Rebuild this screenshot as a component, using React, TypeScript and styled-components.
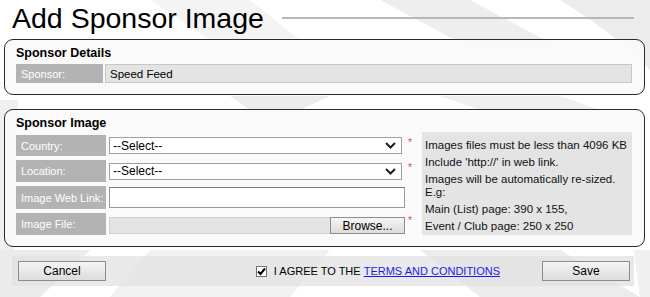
import styled, { createGlobalStyle } from 'styled-components';

const GlobalStyle = createGlobalStyle`
  body {
    margin: 0;
    font-family: "Liberation Sans", Arial, sans-serif;
    font-size: 11px;
    color: #000;
    background: #fff;
  }
`;

const infoLines = [
  ['Images files must be less than 4096 KB'],
  ["Include 'http://' in web link."],
  ['Images will be automatically re-sized.', 'E.g:'],
  ['Main (List) page: 390 x 155,'],
  ['Event / Club page: 250 x 250'],
];

function FlagBackdrop() {
  // faint checkered-flag artwork behind the form
  return (
    <S.Backdrop viewBox="0 0 650 297" preserveAspectRatio="none">
      <polygon points="380,0 470,0 560,48 470,48" fill="#eeeeee" />
      <path d="M560,0 L650,0 L650,70 Q610,30 560,0 Z" fill="#ececec" />
      <path d="M150,0 L250,0 L300,40 L210,40 Z" fill="#f4f4f4" />
      <polygon points="230,96 330,96 300,110 250,110" fill="#ececec" />
      <polygon points="440,96 560,96 600,110 480,110" fill="#efefef" />
      <polygon points="0,100 18,100 14,250 0,250" fill="#f0f0f0" />
      <polygon points="0,250 90,250 40,297 0,297" fill="#ebebeb" />
      <polygon points="150,250 330,250 290,297 110,297" fill="#f1f1f1" />
      <polygon points="420,250 560,250 640,297 480,297" fill="#ececec" />
      <polygon points="634,250 650,250 650,297 640,297" fill="#f0f0f0" />
    </S.Backdrop>
  );
}

function SelectBox() {
  return (
    <S.Select>
      <span>--Select--</span>
      <svg width="11" height="7" viewBox="0 0 11 7">
        <path d="M1 1 L5.5 5.5 L10 1" stroke="#1c1c2c" strokeWidth="2" fill="none" />
      </svg>
    </S.Select>
  );
}

export default function App() {
  return (
    <>
      <GlobalStyle />
      <S.Page>
        <FlagBackdrop />
        <S.Content>
          <S.TitleRow>
            <S.Title>Add Sponsor Image</S.Title>
            <S.TitleRule />
          </S.TitleRow>

          {/* Sponsor Details */}
          <S.Panel>
            <S.Heading>Sponsor Details</S.Heading>
            <S.DetailRow>
              <S.LabelCell $width={82}>Sponsor:</S.LabelCell>
              <S.ValueCell>Speed Feed</S.ValueCell>
            </S.DetailRow>
          </S.Panel>

          {/* Sponsor Image */}
          <S.Panel $gap={14}>
            <S.Heading $below={5}>Sponsor Image</S.Heading>
            <S.FormGrid>
              <S.LabelCell>Country:</S.LabelCell>
              <S.Field>
                <SelectBox />
              </S.Field>
              <S.Required>*</S.Required>

              <S.InfoBox>
                {infoLines.map((lines, i) => (
                  <S.InfoPara key={i}>
                    {lines.map((l) => (
                      <div key={l}>{l}</div>
                    ))}
                  </S.InfoPara>
                ))}
              </S.InfoBox>

              <S.LabelCell>Location:</S.LabelCell>
              <S.Field>
                <SelectBox />
              </S.Field>
              <S.Required>*</S.Required>

              <S.LabelCell>Image Web Link:</S.LabelCell>
              <S.Field>
                <S.TextInput />
              </S.Field>
              <span />

              <S.LabelCell>Image File:</S.LabelCell>
              <S.Field>
                <S.FileField>
                  <S.FileName />
                  <S.Button $width={75} $height={17}>Browse...</S.Button>
                </S.FileField>
              </S.Field>
              <S.Required>*</S.Required>
            </S.FormGrid>
          </S.Panel>

          <S.ActionBar>
            <S.Button $width={88}>Cancel</S.Button>
            <S.Agree>
              <S.CheckBox>
                <svg width="9" height="9" viewBox="0 0 9 9">
                  <path d="M1 4.5 L3.5 7 L8 1.5" stroke="#000" strokeWidth="2" fill="none" />
                </svg>
              </S.CheckBox>
              I AGREE TO THE <S.Link href="#">TERMS AND CONDITIONS</S.Link>
            </S.Agree>
            <S.Button $width={88}>Save</S.Button>
          </S.ActionBar>
        </S.Content>
      </S.Page>
    </>
  );
}

const S = {
  Page: styled.div`
    position: relative;
    width: 650px;
    height: 297px;
    overflow: hidden;
    background: #fff;
  `,
  Backdrop: styled.svg`
    position: absolute;
    inset: 0;
    width: 100%;
    height: 100%;
  `,
  Content: styled.div`
    position: relative;
    z-index: 1;
  `,
  TitleRow: styled.div`
    display: flex;
    align-items: center;
    height: 36px;
    padding: 0 16px 0 12px;
    margin-bottom: 3px;
  `,
  Title: styled.h1`
    margin: 0;
    font-size: 28.5px;
    font-weight: normal;
    line-height: 34px;
    color: #000;
  `,
  TitleRule: styled.div`
    flex: 1;
    height: 2px;
    margin: 0 0 1px 18px;
    background: #b8b8b8;
  `,
  Panel: styled.section<{ $gap?: number }>`
    margin: ${({ $gap = 0 }) => $gap}px 5px 0 4px;
    padding: 6px 12px 11px 11px;
    border: 1px solid #2a2a2a;
    border-radius: 9px;
    background: rgba(250, 250, 250, 0.92);
  `,
  Heading: styled.h2<{ $below?: number }>`
    margin: 0 0 ${({ $below = 4 }) => $below}px;
    font-size: 12.5px;
    font-weight: bold;
    line-height: 14px;
  `,
  DetailRow: styled.div`
    display: flex;
    gap: 2px;
    height: 19px;
  `,
  LabelCell: styled.div<{ $width?: number }>`
    display: flex;
    align-items: center;
    ${({ $width }) => ($width ? `width: ${$width}px;` : '')}
    padding-left: 5px;
    background: #b3b3b3;
    color: #fff;
    font-size: 11px;
    white-space: nowrap;
    overflow: hidden;
  `,
  ValueCell: styled.div`
    flex: 1;
    display: flex;
    align-items: center;
    padding-left: 4px;
    background: #e4e4e4;
    border: 1px solid #c8c8c8;
    font-size: 11.5px;
  `,
  FormGrid: styled.div`
    display: grid;
    grid-template-columns: 90px 296px 11px 210px;
    grid-template-rows: 21px 22px 23px 22px;
    column-gap: 3px;
    row-gap: 4px;
  `,
  Field: styled.div`
    display: flex;
    align-items: center;
  `,
  Select: styled.div`
    box-sizing: border-box;
    display: flex;
    align-items: center;
    justify-content: space-between;
    width: 293px;
    height: 17px;
    padding: 0 5px 0 3px;
    border: 1px solid #a0a0a0;
    background: #fff;
    font-size: 12px;
  `,
  TextInput: styled.input`
    box-sizing: border-box;
    width: 100%;
    height: 21px;
    margin: 0;
    border: 1px solid #9a9a9a;
    border-top-color: #7a7a7a;
    background: #fff;
  `,
  FileField: styled.div`
    display: flex;
    width: 100%;
    height: 17px;
    margin-top: 3px;
  `,
  FileName: styled.div`
    flex: 1;
    background: #e4e4e4;
    border: 1px solid #cfcfcf;
    border-right: none;
  `,
  Required: styled.span`
    align-self: start;
    margin-top: 3px;
    color: #e04a3a;
    font-size: 10px;
    line-height: 10px;
  `,
  InfoBox: styled.div`
    grid-column: 4;
    grid-row: 1 / -1;
    margin: -3px 0 0;
    padding: 7px 3px 0;
    background: #e4e4e4;
    color: #111;
    font-size: 11.5px;
  `,
  InfoPara: styled.div`
    line-height: 13px;
    margin-bottom: 4px;
  `,
  Button: styled.button<{ $width: number; $height?: number }>`
    box-sizing: border-box;
    width: ${({ $width }) => $width}px;
    height: ${({ $height = 20 }) => $height}px;
    margin: 0;
    padding: 0;
    border: 1px solid #8c8c8c;
    background: linear-gradient(#f5f5f5, #dcdcdc);
    font-family: "Liberation Sans", Arial, sans-serif;
    font-size: 12px;
    color: #000;
  `,
  ActionBar: styled.div`
    display: flex;
    align-items: center;
    height: 30px;
    margin: 9px 16px 0 12px;
    padding: 0 4px 0 6px;
    background: rgba(226, 226, 226, 0.75);
  `,
  Agree: styled.div`
    display: flex;
    align-items: center;
    margin: 0 42px 0 auto;
    white-space: pre;
  `,
  CheckBox: styled.span`
    box-sizing: border-box;
    display: inline-flex;
    align-items: center;
    justify-content: center;
    width: 11px;
    height: 11px;
    margin-right: 7px;
    border: 1px solid #707070;
    background: #fff;
  `,
  Link: styled.a`
    color: #1a1aee;
    text-decoration: underline;
  `,
};
